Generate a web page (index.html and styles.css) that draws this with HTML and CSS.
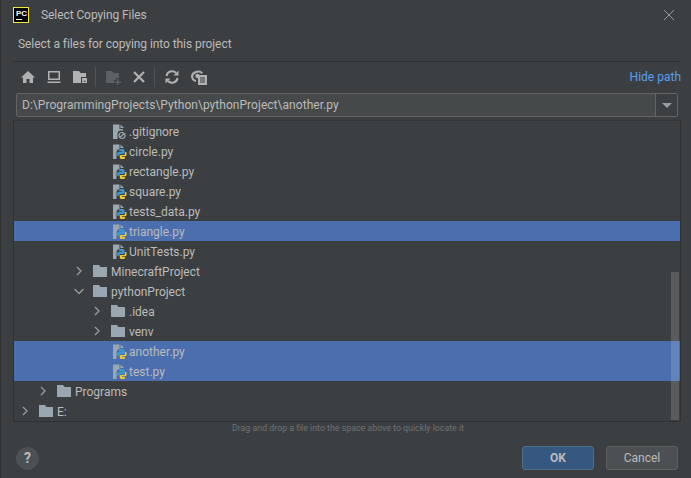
FILE: index.html
```html
<!DOCTYPE html>
<html lang="en">
<head>
  <meta charset="UTF-8">
  <title>Select Copying Files</title>
  <link rel="stylesheet" href="styles.css">
</head>
<body>

<svg class="defs" width="0" height="0">
  <symbol id="folder" viewBox="0 0 14 12">
    <path d="M0 0h6l1.500 2H14v10H0z" fill="#9aa7b0"/>
  </symbol>
  <symbol id="pyfile" viewBox="0 0 16 17">
    <path d="M1 1.500h6.500V6H8A3.500 3.500 0 0 0 4.500 9v7H1z" fill="#9aa7b0"/>
    <path d="M8.500 1.500l3.500 3.500H8.500z" fill="#9aa7b0"/>
    <path d="M8 6h3a1.500 1.500 0 0 1 1.500 1.500V10a1 1 0 0 1-1 1H8.500a1 1 0 0 0-1 1v1H6.500A1.500 1.500 0 0 1 5 11.500v-1A1.500 1.500 0 0 1 6.500 9H10v-.7H7V7.200A1.200 1.200 0 0 1 8 6z" fill="#3f97c9"/>
    <path d="M13 9h.5a1 1 0 0 1 1 1.500v1.200a1.500 1.500 0 0 1-1.500 1.500h-3v.7h3v1.100a1.200 1.200 0 0 1-1.200 1H9a1.500 1.500 0 0 1-1.200-1.500V13a1 1 0 0 1 1-1H12a1 1 0 0 0 1-1z" fill="#f4c82d"/>
  </symbol>
  <symbol id="chev-right" viewBox="0 0 14 14">
    <path d="M5 3l4 4-4 4" fill="none" stroke="#9a9d9f" stroke-width="1.300"/>
  </symbol>
  <symbol id="chev-down" viewBox="0 0 14 14">
    <path d="M2.500 5l4.500 4.500L11.500 5" fill="none" stroke="#9a9d9f" stroke-width="1.300"/>
  </symbol>
</svg>

<div class="dialog">
  <div class="titlebar">
    <div class="logo"><span class="logo-text">PC</span><span class="logo-bar"></span></div>
    <span class="title">Select Copying Files</span>
    <svg class="close" width="12" height="12" viewBox="0 0 12 12"><path d="M1 1l10 10M11 1L1 11" stroke="#9a9d9f" stroke-width="1"/></svg>
  </div>

  <div class="prompt">Select a files for copying into this project</div>

  <div class="toolbar">
    <svg class="tool" width="16" height="16" viewBox="0 0 16 16"><path d="M8 2l7 6.500h-2V14H9.500v-4h-3v4H3V8.500H1z" fill="#afb1b3"/></svg>
    <svg class="tool" width="16" height="16" viewBox="0 0 16 16"><path d="M2 2h12v9H2zM3.500 3.500v6h9v-6zM1.500 12.500h13V14h-13z" fill="#afb1b3" fill-rule="evenodd"/></svg>
    <svg class="tool" width="16" height="16" viewBox="0 0 16 16"><path d="M1 2h6l1.500 2H14v4H9v6H1z" fill="#afb1b3"/><path d="M10 9h5v5h-5zM11.500 11.800v1h2v-1z" fill="#afb1b3" fill-rule="evenodd"/></svg>
    <span class="tool-sep"></span>
    <svg class="tool" width="16" height="16" viewBox="0 0 16 16"><path d="M1 2h6l1.500 2H14v5h-3v2H9v3H1z" fill="#5d6163"/><path d="M12 10h1.500v2.500H16V14h-2.500v2H12v-2H9.500v-1.500H12z" fill="#5d6163"/></svg>
    <svg class="tool" width="16" height="16" viewBox="0 0 16 16"><path d="M3 3l10 10M13 3L3 13" stroke="#afb1b3" stroke-width="2.200"/></svg>
    <span class="tool-sep"></span>
    <svg class="tool" width="16" height="16" viewBox="0 0 16 16"><path d="M2.500 7a5.500 5.500 0 0 1 9.500-3M13.500 9A5.500 5.500 0 0 1 4 12" fill="none" stroke="#afb1b3" stroke-width="2"/><path d="M9.500 6.500h5v-5zM6.500 9.500h-5v5z" fill="#afb1b3"/></svg>
    <svg class="tool" width="18" height="16" viewBox="0 0 18 16"><path d="M1 7a7 6 0 0 1 12-3.500L11.500 5A5 4.500 0 0 0 3 7.500a4 4 0 0 0 3 3.500V13A6 6 0 0 1 1 7z" fill="#afb1b3"/><circle cx="7.500" cy="7" r="2.200" fill="#afb1b3"/><path d="M8 6h9v10H8z" fill="#afb1b3"/><path d="M10 9h5M10 11h5M10 13h5" stroke="#3c3f41"/></svg>
    <a class="hide-path">Hide path</a>
  </div>

  <div class="path-box">
    <span class="path-text">D:\ProgrammingProjects\Python\pythonProject\another.py</span>
    <span class="path-arrow"><span class="arrow"></span></span>
  </div>

  <div class="tree">
    <div class="row d4">
      <svg class="file-icon" width="16" height="17" viewBox="0 0 16 17"><path d="M1 1.500h6.500V6H11v1.500H8.500A3.500 3.500 0 0 0 5.500 11v5H1z" fill="#9aa7b0"/><path d="M8.500 1.500l3.500 3.500H8.500z" fill="#9aa7b0"/><circle cx="10" cy="12.500" r="3" fill="none" stroke="#9aa7b0" stroke-width="1.200"/><path d="M8 14.500l4-4" stroke="#9aa7b0" stroke-width="1.200"/></svg>
      <span>.gitignore</span>
    </div>
    <div class="row d4"><svg class="file-icon" width="16" height="17"><use href="#pyfile"/></svg><span>circle.py</span></div>
    <div class="row d4"><svg class="file-icon" width="16" height="17"><use href="#pyfile"/></svg><span>rectangle.py</span></div>
    <div class="row d4"><svg class="file-icon" width="16" height="17"><use href="#pyfile"/></svg><span>square.py</span></div>
    <div class="row d4"><svg class="file-icon" width="16" height="17"><use href="#pyfile"/></svg><span>tests_data.py</span></div>
    <div class="row d4 selected"><svg class="file-icon" width="16" height="17"><use href="#pyfile"/></svg><span>triangle.py</span></div>
    <div class="row d4"><svg class="file-icon" width="16" height="17"><use href="#pyfile"/></svg><span>UnitTests.py</span></div>
    <div class="row d3"><svg class="chev" width="14" height="14"><use href="#chev-right"/></svg><svg class="folder" width="14" height="12"><use href="#folder"/></svg><span>MinecraftProject</span></div>
    <div class="row d3"><svg class="chev" width="14" height="14"><use href="#chev-down"/></svg><svg class="folder" width="14" height="12"><use href="#folder"/></svg><span>pythonProject</span></div>
    <div class="row d4"><svg class="chev" width="14" height="14"><use href="#chev-right"/></svg><svg class="folder" width="14" height="12"><use href="#folder"/></svg><span>.idea</span></div>
    <div class="row d4"><svg class="chev" width="14" height="14"><use href="#chev-right"/></svg><svg class="folder" width="14" height="12"><use href="#folder"/></svg><span>venv</span></div>
    <div class="row d4 selected"><svg class="file-icon" width="16" height="17"><use href="#pyfile"/></svg><span>another.py</span></div>
    <div class="row d4 selected"><svg class="file-icon" width="16" height="17"><use href="#pyfile"/></svg><span>test.py</span></div>
    <div class="row d1"><svg class="chev" width="14" height="14"><use href="#chev-right"/></svg><svg class="folder" width="14" height="12"><use href="#folder"/></svg><span>Programs</span></div>
    <div class="row d0"><svg class="chev" width="14" height="14"><use href="#chev-right"/></svg><svg class="folder" width="14" height="12"><use href="#folder"/></svg><span>E:</span></div>
    <div class="scrollbar"></div>
  </div>

  <div class="hint">Drag and drop a file into the space above to quickly locate it</div>

  <div class="footer">
    <span class="help">?</span>
    <div class="buttons">
      <button class="btn btn-ok">OK</button>
      <button class="btn">Cancel</button>
    </div>
  </div>
</div>

</body>
</html>
```

FILE: styles.css
```css
html, body {
  margin: 0;
  padding: 0;
}

body {
  width: 691px;
  height: 478px;
  overflow: hidden;
  background-color: #3c3f41;
  color: #bbbbbb;
  font-family: 'Roboto', sans-serif;
  font-size: 12px;
}

.defs {
  position: absolute;
}

.dialog {
  height: 478px;
  box-sizing: border-box;
  border-left: 1px solid #2f3132;
  display: flex;
  flex-direction: column;
}

.titlebar {
  height: 29px;
  display: flex;
  align-items: center;
  padding-left: 12px;
  padding-right: 16px;
}

.logo {
  width: 14px;
  height: 14px;
  border: 1px solid #f5e63c;
  background-color: #000;
  color: #fff;
}

.logo-text {
  display: block;
  font-family: 'Liberation Sans', sans-serif;
  font-size: 8px;
  font-weight: bold;
  line-height: 9px;
  padding-left: 2px;
  padding-top: 1px;
}

.logo-bar {
  display: block;
  width: 6px;
  height: 1px;
  margin-left: 2px;
  margin-top: 1px;
  background-color: #fff;
}

.title {
  margin-left: 12px;
  flex: 1;
  letter-spacing: -0.08px;
}

.prompt {
  height: 32px;
  line-height: 30px;
  padding-left: 17px;
  box-sizing: border-box;
  letter-spacing: -0.07px;
}

.toolbar {
  height: 31px;
  margin-left: 12px;
  margin-right: 10px;
  border-top: 1px solid #2f3133;
  box-sizing: border-box;
  display: flex;
  align-items: center;
  padding-left: 7px;
}

.tool {
  margin-right: 10px;
  flex: none;
}

.tool-sep {
  width: 1px;
  height: 20px;
  background-color: #505355;
  margin-left: -3px;
  margin-right: 9px;
}

.hide-path {
  margin-left: auto;
  color: #589df6;
}

.path-box {
  height: 24px;
  box-sizing: border-box;
  margin-left: 15px;
  margin-right: 13px;
  margin-top: 1px;
  border: 1px solid #646464;
  border-radius: 2px;
  background-color: #45494a;
  display: flex;
  align-items: center;
}

.path-text {
  flex: 1;
  padding-left: 5px;
  letter-spacing: 0.04px;
}

.path-arrow {
  width: 21px;
  height: 100%;
  background-color: #3c3f41;
  border-left: 1px solid #646464;
  display: flex;
  align-items: center;
  justify-content: center;
}

.arrow {
  width: 0;
  height: 0;
  border-left: 5px solid transparent;
  border-right: 5px solid transparent;
  border-top: 5px solid #9a9d9f;
}

.tree {
  height: 300px;
  margin-left: 12px;
  margin-right: 10px;
  margin-top: 3px;
  border: 1px solid #2f3133;
  border-top-color: #333537;
  position: relative;
  overflow: hidden;
}

.row {
  height: 20px;
  display: flex;
  align-items: center;
}

.row span {
  padding-top: 2px;
}

.row.selected {
  background-color: #4b6eaf;
}

.d0 { padding-left: 4px; }
.d1 { padding-left: 22px; }
.d3 { padding-left: 58px; }
.d4 { padding-left: 76px; }

.chev {
  flex: none;
  margin-right: 7px;
}

.folder {
  flex: none;
  margin-right: 4px;
}

.file-icon {
  flex: none;
  margin-left: 22px;
  margin-right: 1px;
}

.scrollbar {
  position: absolute;
  right: 1px;
  top: 151px;
  bottom: 1px;
  width: 8px;
  background-color: rgba(255, 255, 255, 0.15);
}

.hint {
  height: 24px;
  margin-left: 231px;
  font-size: 8.8px;
  line-height: 12px;
  color: #6d7275;
}

.footer {
  display: flex;
  align-items: flex-start;
  padding-left: 15px;
  padding-right: 13px;
}

.help {
  width: 23px;
  height: 23px;
  margin-top: 1px;
  box-sizing: border-box;
  border-radius: 50%;
  border: 1px solid #505355;
  background-color: #4c5052;
  color: #bbbbbb;
  font-weight: bold;
  font-size: 14px;
  line-height: 21px;
  text-align: center;
}

.buttons {
  margin-left: auto;
  display: flex;
  gap: 12px;
}

.btn {
  width: 72px;
  height: 24px;
  padding: 0;
  font-family: inherit;
  font-size: 12px;
  color: #bbbbbb;
  background-color: #4c5052;
  border: 1px solid #5e6060;
  border-radius: 3px;
}

.btn-ok {
  background-color: #365880;
  border-color: #4c708c;
  font-weight: bold;
}
```
